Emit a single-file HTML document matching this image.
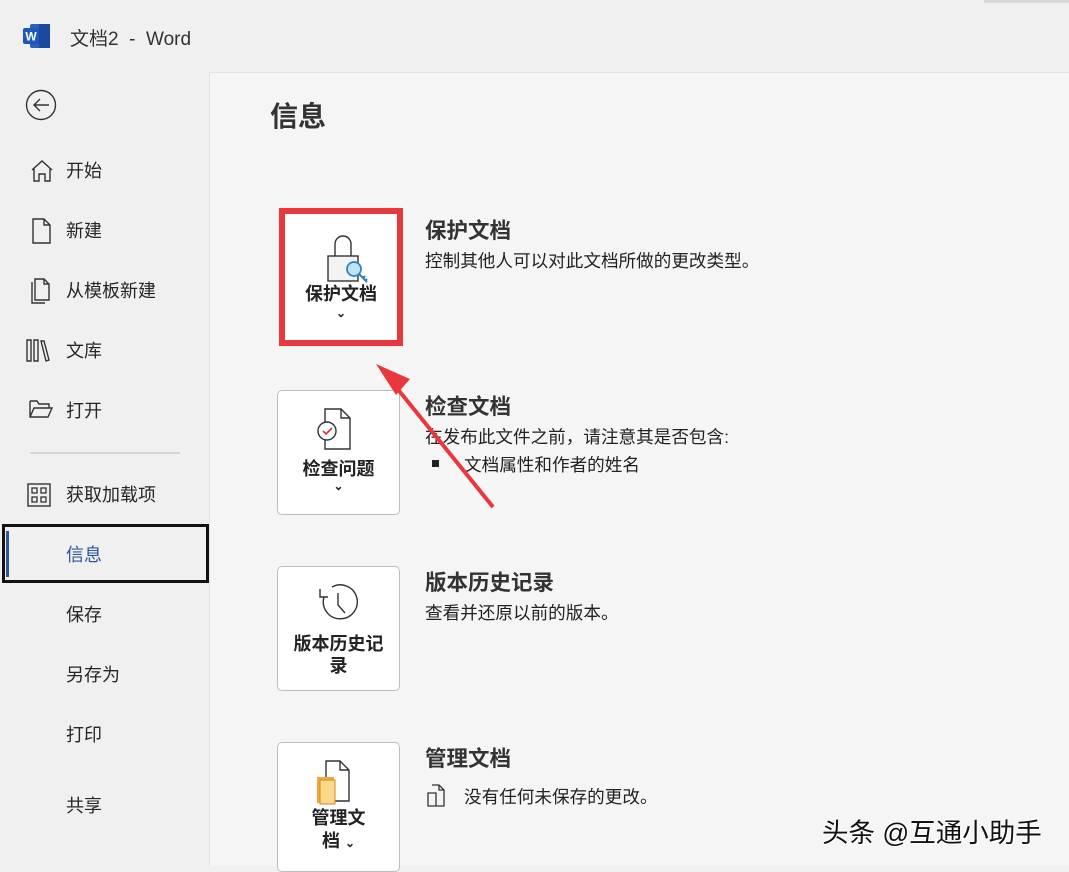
<!DOCTYPE html>
<html><head><meta charset="utf-8"><style>
*{margin:0;padding:0;box-sizing:border-box}
body{width:1069px;height:866px;overflow:hidden;background:#f0f0f0;font-family:"Liberation Sans","Noto Sans CJK SC",sans-serif;color:#222;position:relative}
.abs{position:absolute}
.main{left:209px;top:72px;width:860px;height:794px;background:#f5f5f5;border-left:1px solid #e6e6e6;border-top:1px solid #e4e4e4}
.nav{left:66px;font-size:18px;color:#262626;line-height:24px}
.card{position:absolute;left:277px;width:123px;height:125px;background:#fff;border:1px solid #bdbdbd;border-radius:5px;text-align:center;font-weight:bold;font-size:18px;color:#222}
.t{position:absolute;left:425px;font-size:21.5px;font-weight:bold;color:#333}
.d{position:absolute;left:425px;font-size:17.6px;color:#222}
</style></head><body>
<div class="abs" style="left:984px;top:0;width:85px;height:3px;background:#d8d8d8"></div>
<svg class="abs" style="left:23px;top:23px" width="28" height="26" viewBox="0 0 28 26"><rect x="7" y="1" width="20" height="24" rx="2" fill="#2b5fb8"/><rect x="16" y="1" width="11" height="24" fill="#1a4a9c"/><rect x="0" y="5" width="16" height="16" rx="2" fill="#1f57c1"/><text x="8" y="17.5" font-size="12" font-weight="bold" fill="#fff" text-anchor="middle" font-family="Liberation Sans">W</text></svg>
<div class="abs" style="left:70px;top:24px;font-size:19px;color:#333">文档2&nbsp; - &nbsp;Word</div>
<svg class="abs" style="left:25px;top:89px" width="32" height="32"><circle cx="16" cy="16" r="14.5" fill="none" stroke="#333" stroke-width="1.4"/><path d="M24 16H9M15 10l-6 6 6 6" fill="none" stroke="#333" stroke-width="1.4"/></svg>
<svg class="abs" style="left:29px;top:158px" width="26" height="26"><path d="M3 12L13 3l10 9M5 10v13h5v-7h6v7h5V10" fill="none" stroke="#333" stroke-width="1.4"/></svg>
<div class="abs nav" style="top:159px">开始</div>
<svg class="abs" style="left:32px;top:218px" width="20" height="26"><path d="M1 1h11l6 6v18H1zM12 1v6h6" fill="none" stroke="#333" stroke-width="1.4"/></svg>
<div class="abs nav" style="top:219px">新建</div>
<svg class="abs" style="left:28px;top:278px" width="24" height="26"><path d="M7 1h9l5 5v16H7zM16 1v5h5M4 4v21h13" fill="none" stroke="#333" stroke-width="1.4"/></svg>
<div class="abs nav" style="top:279px">从模板新建</div>
<svg class="abs" style="left:26px;top:338px" width="26" height="26"><path d="M1 2h4v21H1zM8 2h4v21H8zM15 3l3 0 5 19-3 1z" fill="none" stroke="#333" stroke-width="1.4"/></svg>
<div class="abs nav" style="top:339px">文库</div>
<svg class="abs" style="left:29px;top:399px" width="26" height="22"><path d="M1 2h7l2 3h10v4M1 2v16h18l4-9H5l-4 9" fill="none" stroke="#333" stroke-width="1.4"/></svg>
<div class="abs nav" style="top:399px">打开</div>
<div class="abs" style="left:30px;top:452px;width:150px;height:2px;background:#d6d6d6"></div>
<svg class="abs" style="left:27px;top:483px" width="24" height="24"><rect x="1" y="1" width="22" height="22" fill="none" stroke="#333" stroke-width="1.4"/><rect x="5" y="5" width="5" height="5" fill="none" stroke="#333" stroke-width="1.3"/><rect x="14" y="5" width="5" height="5" fill="none" stroke="#333" stroke-width="1.3"/><rect x="5" y="14" width="5" height="5" fill="none" stroke="#333" stroke-width="1.3"/><rect x="14" y="14" width="5" height="5" fill="none" stroke="#333" stroke-width="1.3"/></svg>
<div class="abs nav" style="top:483px">获取加载项</div>
<div class="abs" style="left:2px;top:524px;width:207px;height:59px;border:3px solid #111"></div>
<div class="abs" style="left:6px;top:531px;width:3px;height:46px;background:#2b579a"></div>
<div class="abs nav" style="top:543px;color:#2b579a">信息</div>
<div class="abs nav" style="top:603px">保存</div>
<div class="abs nav" style="top:663px">另存为</div>
<div class="abs nav" style="top:723px">打印</div>
<div class="abs nav" style="top:794px">共享</div>
<div class="abs main"></div>
<div class="abs" style="left:270px;top:95px;font-size:28px;font-weight:bold;color:#333">信息</div>

<div class="card" style="left:279px;top:208px;border:6px solid #e8383d;border-radius:0;height:138px;width:124px">
<svg style="position:absolute;left:36px;top:18px" width="50" height="54"><path d="M14 24v-12a8 8 0 0 1 16 0v12" fill="none" stroke="#333" stroke-width="1.4"/><rect x="7" y="24" width="30" height="25" fill="#f3f3f3" stroke="#333" stroke-width="1.4"/><circle cx="33" cy="37" r="7" fill="#bfe3f5" stroke="#2b7fb8" stroke-width="1.7"/><path d="M38 42l8 8m-4-4l2-2m0 5l2-2" stroke="#2b7fb8" stroke-width="2" fill="none"/></svg>
<div style="position:absolute;left:0;right:0;top:66px">保护文档</div><div style="position:absolute;left:0;right:0;top:92px;font-size:12px">⌄</div></div>
<div class="t" style="top:214px">保护文档</div>
<div class="d" style="top:248px">控制其他人可以对此文档所做的更改类型。</div>

<div class="card" style="top:390px">
<svg style="position:absolute;left:37px;top:16px" width="40" height="46"><path d="M10 2h16l9 9v31H10zM26 2v9h9" fill="#fff" stroke="#333" stroke-width="1.4"/><circle cx="12" cy="24" r="9" fill="#fff" stroke="#333" stroke-width="1.4"/><path d="M8 24l3 3 6-6" fill="none" stroke="#d13438" stroke-width="1.6"/></svg>
<div style="position:absolute;left:0;right:0;top:64px">检查问题</div><div style="position:absolute;left:0;right:0;top:88px;font-size:12px">⌄</div></div>
<div class="t" style="top:390px">检查文档</div>
<div class="d" style="top:424px">在发布此文件之前，请注意其是否包含:</div>
<div class="abs" style="left:432px;top:460px;width:7px;height:7px;background:#222"></div>
<div class="d" style="top:452px;left:464px">文档属性和作者的姓名</div>

<div class="card" style="top:566px">
<svg style="position:absolute;left:36px;top:16px" width="50" height="46"><path d="M10 14a17 17 0 1 0 8-10" fill="none" stroke="#333" stroke-width="1.4"/><path d="M6 6v8h8" fill="none" stroke="#333" stroke-width="1.4"/><path d="M24 10v12l7 8" fill="none" stroke="#333" stroke-width="1.4"/></svg>
<div style="position:absolute;left:0;right:0;top:66px;line-height:22px">版本历史记<br>录</div></div>
<div class="t" style="top:566px">版本历史记录</div>
<div class="d" style="top:600px">查看并还原以前的版本。</div>

<div class="card" style="top:742px;height:130px">
<svg style="position:absolute;left:36px;top:16px" width="44" height="48"><path d="M12 2h14l9 9v31H12zM26 2v9h9" fill="#fff" stroke="#333" stroke-width="1.4"/><rect x="3" y="18" width="17" height="26" fill="#f2a93b"/><rect x="6" y="21" width="15" height="24" fill="#fbd88a" stroke="#d08a1e"/></svg>
<div style="position:absolute;left:0;right:0;top:64px;line-height:23px">管理文<br>档 <span style="font-size:12px">⌄</span></div></div>
<div class="t" style="top:742px">管理文档</div>
<svg class="abs" style="left:426px;top:784px" width="20" height="24"><path d="M6 1h7l5 5v16H10M13 1v5h5M2 9h8v13H2z" fill="none" stroke="#333" stroke-width="1.3"/></svg>
<div class="d" style="top:784px;left:464px">没有任何未保存的更改。</div>

<svg class="abs" style="left:370px;top:355px" width="130" height="160"><path d="M123 152L26 32" stroke="#e8383d" stroke-width="4"/><path d="M6 9L40 24 26 40z" fill="#e8383d"/></svg>
<div class="abs" style="left:822px;top:811px;font-size:26.5px;color:#111;text-shadow:1px 1px 0 #fff,-1px -1px 0 #fff">头条 @互通小助手</div>
</body></html>
